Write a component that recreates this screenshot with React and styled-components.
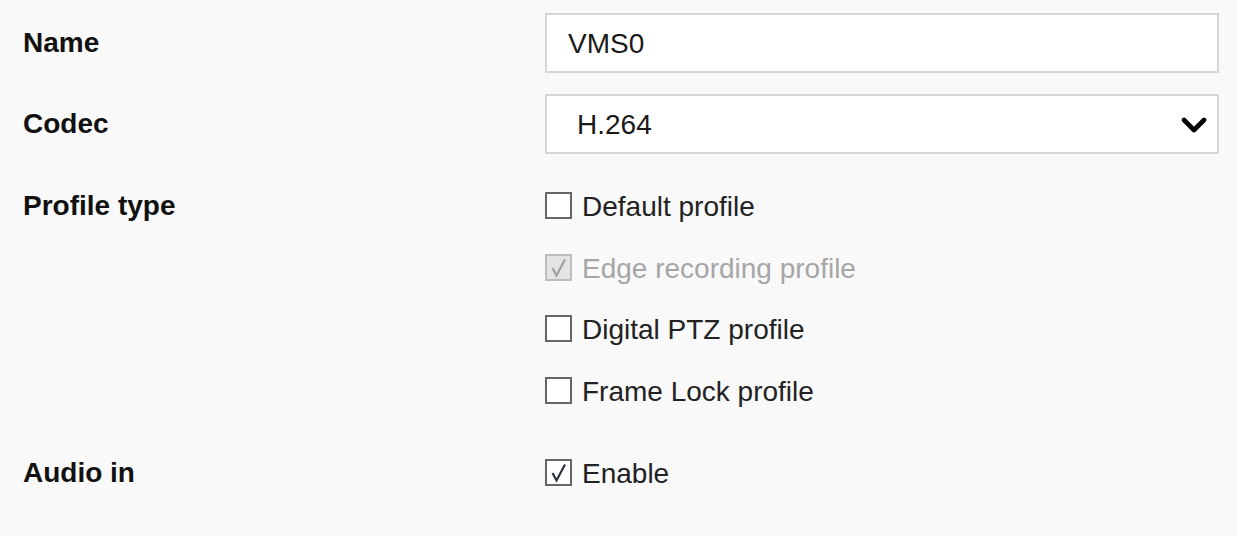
import React from "react";
import styled, { createGlobalStyle } from "styled-components";

const Global = createGlobalStyle`
  html, body { margin: 0; padding: 0; background: #f9f9f9; }
  body { font-family: "Liberation Sans", Arial, sans-serif; }
  * { box-sizing: border-box; }
`;

const Form = styled.div`
  display: grid;
  grid-template-columns: 522px 1fr;
  row-gap: 21px;
  padding: 13px 18px 0 23px;
`;

const Label = styled.div`
  display: flex;
  align-items: center;
  height: ${(p) => p.$h}px;
  font-size: 28px;
  font-weight: bold;
  color: #111;
  align-self: start;
`;

const TextBox = styled.div`
  height: 60px;
  border: 2px solid #d6d6d6;
  background: #fff;
  display: flex;
  align-items: center;
  padding-left: 21px;
  padding-top: 2px;
  font-size: 28px;
  color: #1a1a1a;
`;

const SelectBox = styled(TextBox)`
  padding-left: 30px;
  padding-right: 10px;
  justify-content: space-between;
`;

const CheckList = styled.div`
  display: flex;
  flex-direction: column;
`;

const CheckRow = styled.div`
  height: 61.5px;
  display: flex;
  align-items: center;
  gap: 10px;
  font-size: 28px;
  color: ${(p) => (p.$disabled ? "#a6a6a6" : "#222")};
`;

const CheckText = styled.span`
  padding-top: 3px;
`;

const Box = styled.span`
  width: 27px;
  height: 27px;
  border: 2px solid ${(p) => (p.$disabled ? "#bdbdbd" : "#666")};
  background: ${(p) => (p.$disabled ? "#e4e4e4" : "#fff")};
  display: inline-flex;
  align-items: center;
  justify-content: center;
  flex: none;
`;

const Check = ({ color }) => (
  <svg width="23" height="23" viewBox="0 0 23 23">
    <path d="M5.5 12 L9.5 19.5 L18 3.5" fill="none" stroke={color} strokeWidth="2.2" strokeLinejoin="miter" />
  </svg>
);

const Chevron = () => (
  <svg width="26" height="17" viewBox="0 0 26 17">
    <path d="M3 3 L13 13 L23 3" fill="none" stroke="#000" strokeWidth="4.6" strokeLinecap="round" strokeLinejoin="round" />
  </svg>
);

const CheckItem = ({ label, checked, disabled }) => (
  <CheckRow $disabled={disabled}>
    <Box $disabled={disabled}>
      {checked && <Check color={disabled ? "#a0a0a0" : "#2c3340"} />}
    </Box>
    <CheckText>{label}</CheckText>
  </CheckRow>
);

export default function App() {
  return (
    <>
      <Global />
      <Form>
        <Label $h={60}>Name</Label>
        <TextBox>VMS0</TextBox>

        <Label $h={60}>Codec</Label>
        <SelectBox>
          <span>H.264</span>
          <Chevron />
        </SelectBox>

        <Label $h={61.5}>Profile type</Label>
        <CheckList>
          <CheckItem label="Default profile" />
          <CheckItem label="Edge recording profile" checked disabled />
          <CheckItem label="Digital PTZ profile" />
          <CheckItem label="Frame Lock profile" />
        </CheckList>

        <Label $h={61.5}>Audio in</Label>
        <CheckList>
          <CheckItem label="Enable" checked />
        </CheckList>
      </Form>
    </>
  );
}
